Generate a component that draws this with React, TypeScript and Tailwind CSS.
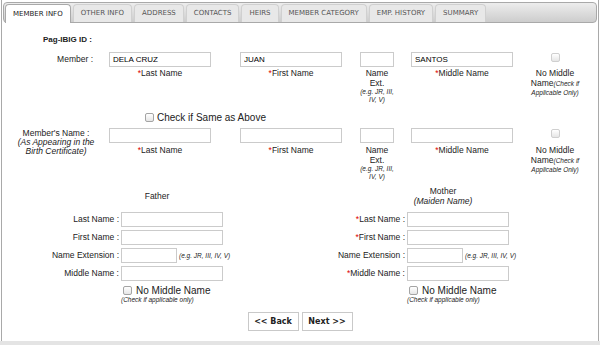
import React from "react";

const tabs = ["MEMBER INFO", "OTHER INFO", "ADDRESS", "CONTACTS", "HEIRS", "MEMBER CATEGORY", "EMP. HISTORY", "SUMMARY"];

function Box({ disabled = false }: { disabled?: boolean }) {
  return (
    <span
      className={
        "inline-block h-[9px] w-[9px] rounded-[2px] border bg-gradient-to-b from-white to-[#e6e6e6] " +
        (disabled ? "border-[#cfcfcf]" : "border-[#a4a4a4]")
      }
    />
  );
}

function Field({ w, value = "" }: { w: string; value?: string }) {
  return (
    <input
      readOnly
      defaultValue={value}
      className={"h-[15px] border border-[#cbcbcb] bg-white px-[3px] text-[8px] text-black outline-none " + w}
    />
  );
}

function Req() {
  return <span className="text-[#d00]">*</span>;
}

function NameRow({ label, vals, gap }: { label: React.ReactNode; vals: string[]; gap: string }) {
  return (
    <div className="flex items-start">
      <div className="w-[98px]">{label}</div>
      <div className="ml-[5px] flex w-[110px] flex-col items-center">
        <Field w="w-[102px]" value={vals[0]} />
        <div className={"leading-[10px] " + gap}>
          <Req />Last Name
        </div>
      </div>
      <div className="ml-[21px] flex w-[110px] flex-col items-center">
        <Field w="w-[102px]" value={vals[1]} />
        <div className={"leading-[10px] " + gap}>
          <Req />First Name
        </div>
      </div>
      <div className="ml-[6px] flex w-[50px] flex-col items-center text-center">
        <Field w="w-[34px]" />
        <div className={"leading-[10px] " + gap}>Name</div>
        <div className="leading-[10px]">Ext.</div>
        <div className="text-[6.5px] italic leading-[8px]">(e.g. JR, III,</div>
        <div className="text-[6.5px] italic leading-[8px]">IV, V)</div>
      </div>
      <div className="ml-[5px] flex w-[110px] flex-col items-center">
        <Field w="w-[102px]" value={vals[2]} />
        <div className={"leading-[10px] " + gap}>
          <Req />Middle Name
        </div>
      </div>
      <div className="ml-[3px] flex w-[70px] flex-col items-center text-center">
        <div className="flex h-[15px] items-start pt-[1px]">
          <Box disabled />
        </div>
        <div className={"leading-[10px] " + gap}>No Middle</div>
        <div className="leading-[10px]">
          Name<span className="text-[6.5px] italic">(Check if</span>
        </div>
        <div className="text-[6.5px] italic leading-[8px]">Applicable Only)</div>
      </div>
    </div>
  );
}

function Parent({ title, sub, req }: { title: string; sub?: string; req?: boolean }) {
  const rows = [
    { l: "Last Name :", r: req },
    { l: "First Name :", r: req },
    { l: "Name Extension :", r: false, ext: true },
    { l: "Middle Name :", r: req },
  ];
  return (
    <div className="flex flex-col">
      <div className="flex h-[20px] flex-col items-center justify-center leading-[10px]">
        <div>{title}</div>
        {sub && <div className="italic">{sub}</div>}
      </div>
      <div className="mt-[6px] flex flex-col gap-[3px]">
        {rows.map((row) => (
          <div key={row.l} className="flex items-center">
            <div className="w-[105px] text-right leading-[15px]">
              {row.r && <Req />}
              {row.l}
            </div>
            <div className="ml-[2px] flex items-center">
              {row.ext ? (
                <>
                  <Field w="w-[56px]" />
                  <span className="ml-[2px] text-[6.5px] italic">(e.g. JR, III, IV, V)</span>
                </>
              ) : (
                <Field w="w-[102px]" />
              )}
            </div>
          </div>
        ))}
      </div>
      <div className="ml-[107px] mt-[3px] flex flex-col">
        <div className="flex h-[12px] items-center gap-[4px] pl-[2px] text-[10px]">
          <Box />
          <span>No Middle Name</span>
        </div>
        <div className="text-[6.5px] italic leading-[8px]">(Check if applicable only)</div>
      </div>
    </div>
  );
}

export default function App() {
  return (
    <div className="h-[345px] w-[600px] bg-white font-['Liberation_Sans',Arial,sans-serif] text-[8.5px] text-[#222]">
      <div className="ml-[1px] flex h-[341px] w-[598px] flex-col border-x border-[#a9a9a9]">
        {/* tabs */}
        <div className="mx-[1px] mt-[2px] flex h-[21px] items-end gap-[2px] rounded-[4px] border border-[#a9a9a9] bg-gradient-to-b from-[#ededed] to-[#cdcdcd] pl-[1px] font-['DejaVu_Sans',Verdana,sans-serif] text-[7px]">
          {tabs.map((t, i) =>
            i === 0 ? (
              <div
                key={t}
                className="-mb-px h-[19px] rounded-t-[4px] border border-b-0 border-[#a9a9a9] bg-white px-[7px] leading-[18px] text-[#222]"
              >
                {t}
              </div>
            ) : (
              <div
                key={t}
                className="h-[18px] rounded-t-[4px] border border-b-0 border-[#d0d0d0] bg-[#e8e8e8] px-[7px] leading-[17px] text-[#555]"
              >
                {t}
              </div>
            )
          )}
        </div>

        <div className="mt-[12px] pl-[41px] text-[8px] font-bold leading-[10px]">Pag-IBIG ID :</div>

        <div className="mt-[7px]">
          <NameRow
            label={<div className="pr-[7px] text-right leading-[15px]">Member :</div>}
            vals={["DELA CRUZ", "JUAN", "SANTOS"]}
            gap="mt-[1px]"
          />
        </div>

        <div className="mt-[7px] flex h-[12px] items-center gap-[3px] pl-[143px] text-[10px]">
          <Box />
          <span>Check if Same as Above</span>
        </div>

        <div className="mt-[5px]">
          <NameRow
            label={
              <div className="pl-[10px] pt-[1px] text-center leading-[9px]">
                <div>Member's Name :</div>
                <div className="italic">(As Appearing in the</div>
                <div className="italic">Birth Certificate)</div>
              </div>
            }
            vals={["", "", ""]}
            gap="mt-[2px]"
          />
        </div>

        <div className="ml-[12px] mt-[5px] grid w-[572px] grid-cols-2">
          <Parent title="Father" />
          <Parent title="Mother" sub="(Maiden Name)" req />
        </div>

        <div className="mt-[8px] flex justify-center gap-[3px] font-['DejaVu_Sans',Verdana,sans-serif] text-[8px] font-bold">
          <button className="h-[19px] w-[51px] border border-[#c9c9c9] bg-white text-[#222]">&lt;&lt; Back</button>
          <button className="h-[19px] w-[51px] border border-[#c9c9c9] bg-white text-[#222]">Next &gt;&gt;</button>
        </div>
      </div>
      <div className="h-[4px] bg-[#e4e4e4]" />
    </div>
  );
}
